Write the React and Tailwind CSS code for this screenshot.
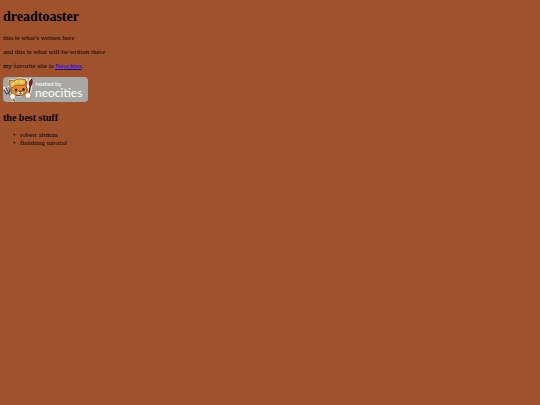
const stuff = ["robert altman", "finishing tutorial"];

function NeocitiesBadge() {
  return (
    <svg
      viewBox="0 0 170 50"
      className="block w-[85px] h-[25px]"
      role="img"
      aria-label="hosted by neocities"
    >
      <rect width="170" height="50" rx="8" fill="#a9a7a3" />

      {/* fork */}
      <g stroke="#e9e5dd" strokeWidth="6" strokeLinecap="round" fill="none">
        <path d="M3 22l7 11M12 20l2 10M11 31l11 16" />
      </g>
      <g stroke="#454d57" strokeWidth="2.5" strokeLinecap="round" fill="none">
        <path d="M2 26l6 8M6 22l5 10M12 21l1 10M7 34l6-3M11 33l12 15" />
      </g>

      {/* paint brush */}
      <path d="M56 6l-5 31" stroke="#e9e5dd" strokeWidth="9" strokeLinecap="round" />
      <path d="M55 16l-4 21" stroke="#5b1f22" strokeWidth="3" strokeLinecap="round" />
      <path d="M58 3q-7 5-6 13l4 2q5-7 2-15z" fill="#8c1620" stroke="#481318" />

      {/* cat head */}
      <path
        d="M16 22L12 6l11 0q8-7 17-3l8 1v9q5 8 1 16q-6 9-18 9q-12-1-15-9z"
        fill="#f5eee1"
        stroke="#f5eee1"
        strokeWidth="2"
        strokeLinejoin="round"
      />
      <path
        d="M17 20l-2-9 9 2q8-5 16-2l7-2-1 9q5 7 1 13q-5 7-15 6q-13 0-16-7-2-5 1-10z"
        fill="#e58a2a"
        stroke="#71401f"
        strokeWidth="2"
      />
      <path d="M14 19L13 7l9 1q6-6 15-4l8 1 1 9-8 3q-13-3-20 5z" fill="#eebb4c" stroke="#8a6427" strokeWidth="2" />
      <path d="M18 15q5-6 11-7M34 8l6 4" stroke="#fbe394" strokeWidth="2" fill="none" />
      <path d="M28 32q3-3 6-1q4-2 7 1q-2 4-7 4q-5 0-6-4z" fill="#fff7e9" />
      <ellipse cx="26" cy="26" rx="2.5" ry="3" fill="#35201a" />
      <ellipse cx="41" cy="25" rx="2.5" ry="3" fill="#35201a" />
      <path d="M32 28h5l-2 3zM31 33q4 3 7 0" fill="#5b2820" stroke="#5b2820" />

      {/* paws */}
      <circle cx="19" cy="39" r="6" fill="#fff9ef" stroke="#a56a3a" strokeWidth="1.5" />
      <circle cx="50" cy="37" r="6" fill="#fff9ef" stroke="#a56a3a" strokeWidth="1.5" />

      <g fill="#fff" className="font-['Lato',sans-serif]">
        <text x="65" y="18" fontSize="12">hosted by</text>
        <text x="64" y="39" fontSize="24">neocities</text>
      </g>
    </svg>
  );
}

function App() {
  return (
    <div className="min-h-screen bg-[#a0522d] px-[3px] pt-[9px] font-['Liberation_Serif',serif] text-[7px] leading-[8px] text-black">
      <h1 className="text-[14px] leading-4 font-bold">dreadtoaster</h1>

      <div className="mt-[9px] flex flex-col items-start gap-[6px]">
        <p>this is what's written here</p>
        <p>and this is what will be written there</p>
        <p>
          my favorite site is{" "}
          <a href="https://neocities.org" className="text-[#0000ee] underline">
            Neocities
          </a>
          .
        </p>
      </div>

      <a href="https://neocities.org" className="mt-[7px] block w-fit">
        <NeocitiesBadge />
      </a>

      <h2 className="mt-[10px] text-[10px] leading-3 font-bold">the best stuff</h2>

      <ul className="mt-[7px] pl-[10px]">
        {stuff.map((item) => (
          <li key={item} className="flex before:w-[7px] before:content-['•']">
            {item}
          </li>
        ))}
      </ul>
    </div>
  );
}

export default App;
